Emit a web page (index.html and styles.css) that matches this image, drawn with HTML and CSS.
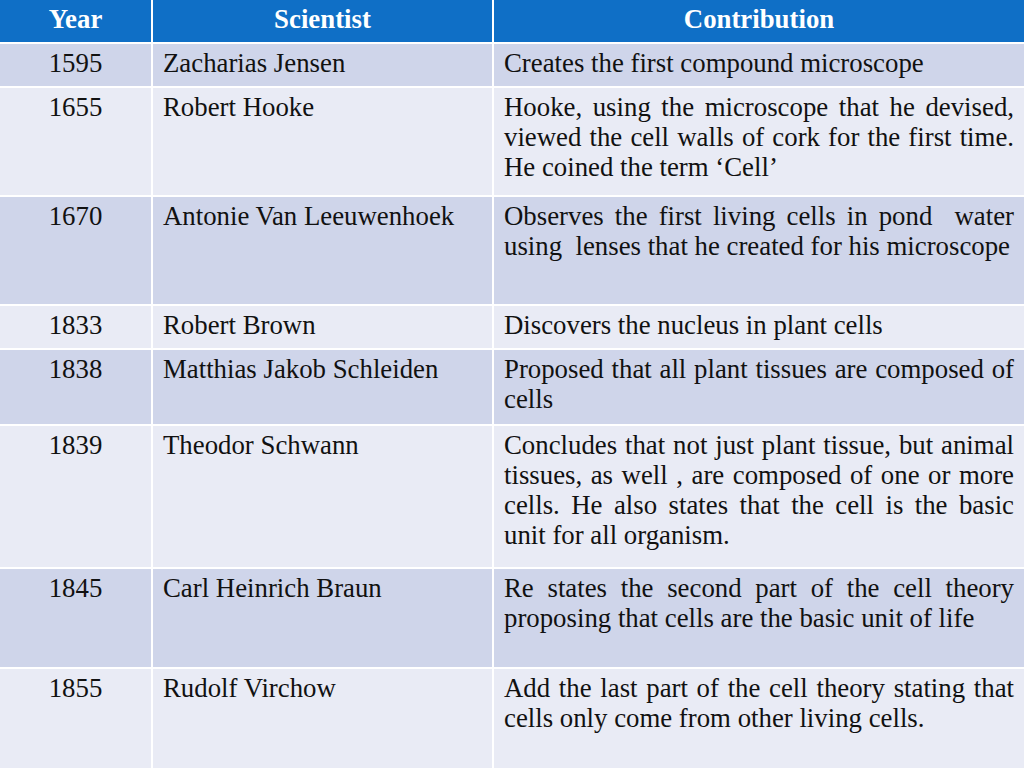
FILE: index.html
```html
<!DOCTYPE html>
<html>
<head>
<meta charset="utf-8">
<link rel="stylesheet" href="styles.css">
</head>
<body>
<table class="tbl">
<colgroup><col class="c-year"><col class="c-sci"><col class="c-con"></colgroup>
<thead>
<tr class="head"><th>Year</th><th>Scientist</th><th>Contribution</th></tr>
</thead>
<tbody>
<tr class="dark h43"><td class="yr">1595</td><td>Zacharias Jensen</td><td class="con">Creates the first compound microscope</td></tr>
<tr class="light h108"><td class="yr">1655</td><td>Robert Hooke</td><td class="con">Hooke, using the microscope that he devised, viewed the cell walls of cork for the first time. He coined the term ‘Cell’</td></tr>
<tr class="dark h108"><td class="yr">1670</td><td>Antonie Van Leeuwenhoek</td><td class="con">Observes the first living cells in pond&nbsp; water using&nbsp; lenses that he created for his microscope</td></tr>
<tr class="light h43"><td class="yr">1833</td><td>Robert Brown</td><td class="con">Discovers the nucleus in plant cells</td></tr>
<tr class="dark h75"><td class="yr">1838</td><td>Matthias Jakob Schleiden</td><td class="con">Proposed that all plant tissues are composed of cells</td></tr>
<tr class="light h142"><td class="yr">1839</td><td>Theodor Schwann</td><td class="con">Concludes that not just plant tissue, but animal tissues, as well , are composed of one or more cells. He also states that the cell is the basic unit for all organism.</td></tr>
<tr class="dark h99"><td class="yr">1845</td><td>Carl Heinrich Braun</td><td class="con">Re states the second part of the cell theory proposing that cells are the basic unit of life</td></tr>
<tr class="light h102"><td class="yr">1855</td><td>Rudolf Virchow</td><td class="con">Add the last part of the cell theory stating that cells only come from other living cells.</td></tr>
</tbody>
</table>
</body>
</html>
```
FILE: styles.css
```css
html, body {
  margin: 0;
  padding: 0;
  background: #ffffff;
}
.tbl {
  width: 1024px;
  border-collapse: collapse;
  table-layout: fixed;
  font-family: "Liberation Serif", "Times New Roman", serif;
  font-size: 26.8px;
  color: #111111;
}
.c-year { width: 152px; }
.c-sci { width: 341px; }
.c-con { width: 531px; }
.tbl th, .tbl td {
  border: 2px solid #ffffff;
  vertical-align: top;
  padding: 4px 10px 0 10px;
  line-height: 30px;
  text-align: left;
  overflow: hidden;
}
.tbl tr:first-child th { border-top: 0; }
.tbl th:first-child, .tbl td:first-child { border-left: 0; }
.tbl th:last-child, .tbl td:last-child { border-right: 0; }
.head { height: 43px; background: #0F6FC6; }
.head th {
  color: #ffffff;
  font-weight: bold;
  text-align: center;
  padding-top: 4px;
}
.dark { background: #CFD5EA; }
.light { background: #E9EBF5; }
.yr { text-align: center !important; }
.con { text-align: justify !important; }
.h43 { height: 44px; }
.h75 { height: 76px; }
.h99 { height: 100px; }
.h102 { height: 102px; }
.h108 { height: 109px; }
.h142 { height: 143px; }
```
